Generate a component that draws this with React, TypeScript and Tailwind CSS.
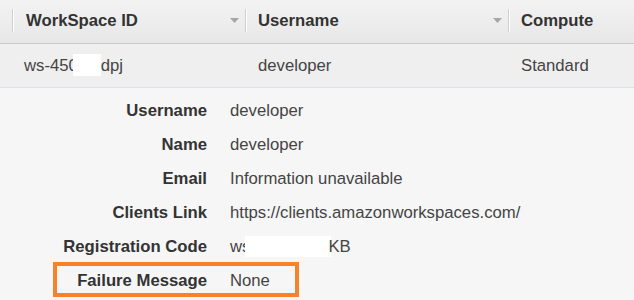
const details = [
  { label: "Username", value: "developer" },
  { label: "Name", value: "developer" },
  { label: "Email", value: "Information unavailable" },
  { label: "Clients Link", value: "https://clients.amazonworkspaces.com/" },
  { label: "Registration Code", value: "code" },
  { label: "Failure Message", value: "None", highlight: true },
];

function SortArrow() {
  return (
    <svg width="9" height="5" viewBox="0 0 9 5" className="shrink-0">
      <path d="M0 0h9L4.5 5z" fill="#a6a6a6" />
    </svg>
  );
}

function Sep() {
  return <div className="h-[23px] w-[2px] shrink-0 border-l border-[#cfcfcf] bg-white" />;
}

export default function App() {
  return (
    <div
      className="h-[300px] w-[634px] overflow-hidden bg-[#f6f6f6] text-[16.7px] text-[#444]"
      style={{ fontFamily: '"Liberation Sans", Arial, sans-serif' }}
    >
      {/* header */}
      <div className="flex h-[44px] items-center border-b border-[#c9c9c9] bg-gradient-to-b from-[#f3f3f3] to-[#e7e7e7] pb-[2px] font-bold text-[#333]">
        <div className="ml-[12px]">
          <Sep />
        </div>
        <div className="flex w-[231px] items-center justify-between pl-[12px] pr-[6px]">
          <span>WorkSpace ID</span>
          <SortArrow />
        </div>
        <Sep />
        <div className="flex w-[261px] items-center justify-between pl-[11px] pr-[6px]">
          <span>Username</span>
          <SortArrow />
        </div>
        <Sep />
        <div className="pl-[11px]">Compute</div>
      </div>

      {/* row */}
      <div className="flex h-[44px] items-center border-b border-[#dbe3ea] bg-[#efefef]">
        <div className="flex w-[258px] items-center pl-[24px]">
          <span>ws-450</span>
          <span className="ml-[-5px] inline-block h-[22px] w-[28px] bg-white" />
          <span>dpj</span>
        </div>
        <div className="w-[263px]">developer</div>
        <div>Standard</div>
      </div>

      {/* details */}
      <div className="flex flex-col pt-[6px]">
        {details.map((d) => (
          <div key={d.label} className="relative grid h-[34px] grid-cols-[207px_1fr] items-center gap-[23px]">
            <div className="text-right font-bold text-[#333]">{d.label}</div>
            <div className="flex items-center">
              {d.value === "code" ? (
                <>
                  <span>ws</span>
                  <span className="ml-[-5px] inline-block h-[21px] w-[86px] bg-white" />
                  <span className="ml-[-3px]">KB</span>
                </>
              ) : (
                d.value
              )}
            </div>
            {d.highlight && (
              <div className="absolute left-[53px] top-[-2px] h-[35px] w-[246px] border-[4px] border-[#f7822a]" />
            )}
          </div>
        ))}
      </div>
    </div>
  );
}
